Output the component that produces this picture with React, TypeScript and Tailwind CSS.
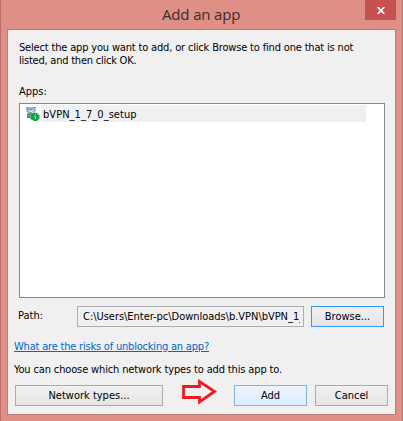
import type { ReactNode } from "react";

type DialogButtonProps = {
  className: string;
  children: ReactNode;
};

function DialogButton({ className, children }: DialogButtonProps) {
  return (
    <button
      className={`flex h-[21px] shrink-0 items-center justify-center border leading-[13px] whitespace-nowrap ${className}`}
    >
      {children}
    </button>
  );
}

function SetupIcon() {
  return (
    <svg width="15" height="16" viewBox="0 0 15 16" className="shrink-0">
      <path d="M1 1h10v7H4L1 6z" fill="#b3cbdc" />
      <path d="M1 1.500l4 1 6-1M2 5.500l4-2 4 1M2 3.500h2M7 3.500h3" fill="none" stroke="#6f93b0" />
      <path d="M4 4l4 3M5 7l4-4" stroke="#e5f1f8" />
      <path d="M2 8l3-2 4 2v4l-2 2-2-2H2z" fill="#3f8f68" />
      <path d="M3 9.500l3 1M4 7.500l3 2" stroke="#7fb59b" />
      <path d="M6 9l2-2h4l2.500 2.500v3L12 15H9l-3-2z" fill="#17a34a" />
      <path d="M9 10.500h1.500V13M10.500 8v1" fill="none" stroke="#8be0a5" />
    </svg>
  );
}

function ArrowMark() {
  return (
    <svg width="36" height="27" viewBox="0 0 36 27" className="ml-[18px] shrink-0">
      <path
        d="M2.500 7.500H18.500V2.500L33.500 12.500L18.500 23V18.500H2.500Z"
        fill="none"
        stroke="#ed1c24"
        strokeWidth="2.800"
      />
    </svg>
  );
}

export default function App() {
  return (
    <div className="flex h-[421px] w-[403px] flex-col border-x border-x-[#b6726b] bg-[#df8f85] pl-[6px] font-['DejaVu_Sans_Condensed','DejaVu_Sans',sans-serif] text-[11px] leading-[13px] text-black [font-stretch:condensed]">
      <header className="flex h-[29px] shrink-0 justify-between">
        <h1 className="ml-[155px] pt-[4px] font-['Open_Sans',sans-serif] text-[15px] leading-[21px] tracking-[-0.15px] whitespace-nowrap text-[#3b2d2f] [font-stretch:normal]">
          Add an app
        </h1>
        <button aria-label="Close" className="mr-[6px] flex h-5 w-[31px] items-center justify-center bg-[#c75050]">
          <svg width="8" height="7" viewBox="0 0 8 7">
            <path d="M.7 0L7.300 7M7.300 0L.7 7" stroke="white" strokeWidth="1.700" />
          </svg>
        </button>
      </header>

      <main className="flex h-[386px] w-[389px] shrink-0 flex-col border border-[#b87d76] bg-[#f0f0f0]">
        <p className="mt-[11px] ml-[11px] tracking-[-0.17px] whitespace-nowrap">
          <span className="block">Select the app you want to add, or click Browse to find one that is not</span>
          <span className="block tracking-[-0.23px]">listed, and then click OK.</span>
        </p>
        <p className="mt-[18px] ml-[11px]">Apps:</p>

        <div className="mt-[5px] ml-[11px] h-[195px] w-[366px] shrink-0 border border-[#828790] bg-white pt-px pl-[5px]">
          <div className="flex h-[17px] items-center">
            <SetupIcon />
            <span className="ml-px h-[17px] w-[325px] bg-[#f0f0f0] pl-[2px] leading-[19px] tracking-[0.05px]">
              bVPN_1_7_0_setup
            </span>
          </div>
        </div>

        <div className="mt-[8px] flex h-[21px] shrink-0">
          <span className="w-[69px] pt-[3px] pl-[10px]">Path:</span>
          <div className="flex w-[227px] items-center border border-[#abadb3] px-[3px]">
            <div className="overflow-hidden pl-[2px] tracking-[-0.03px] whitespace-nowrap">
              C:\Users\Enter-pc\Downloads\b.VPN\bVPN_1_
            </div>
          </div>
          <DialogButton className="ml-[7px] w-[73px] border-[#3399ff] bg-linear-to-b from-[#f0f0f0] to-[#e5e5e5]">
            Browse...
          </DialogButton>
        </div>

        <a href="#" className="mt-[13px] ml-[6px] self-start tracking-[-0.2px] whitespace-nowrap text-[#0066cc] underline">
          What are the risks of unblocking an app?
        </a>
        <p className="mt-[10px] ml-[6px] tracking-[-0.14px] whitespace-nowrap">
          You can choose which network types to add this app to.
        </p>

        <div className="mt-[3px] flex h-[27px] shrink-0 items-end pl-[7px]">
          <DialogButton className="w-[148px] border-[#acacac] bg-linear-to-b from-[#f0f0f0] to-[#e5e5e5]">
            Network types...
          </DialogButton>
          <ArrowMark />
          <DialogButton className="ml-[17px] w-[73px] border-[#7eb4ea] bg-linear-to-b from-[#ecf4fc] to-[#dcecfc]">
            Add
          </DialogButton>
          <DialogButton className="ml-[8px] w-[73px] border-[#acacac] bg-linear-to-b from-[#f0f0f0] to-[#e5e5e5]">
            Cancel
          </DialogButton>
        </div>
      </main>
    </div>
  );
}
